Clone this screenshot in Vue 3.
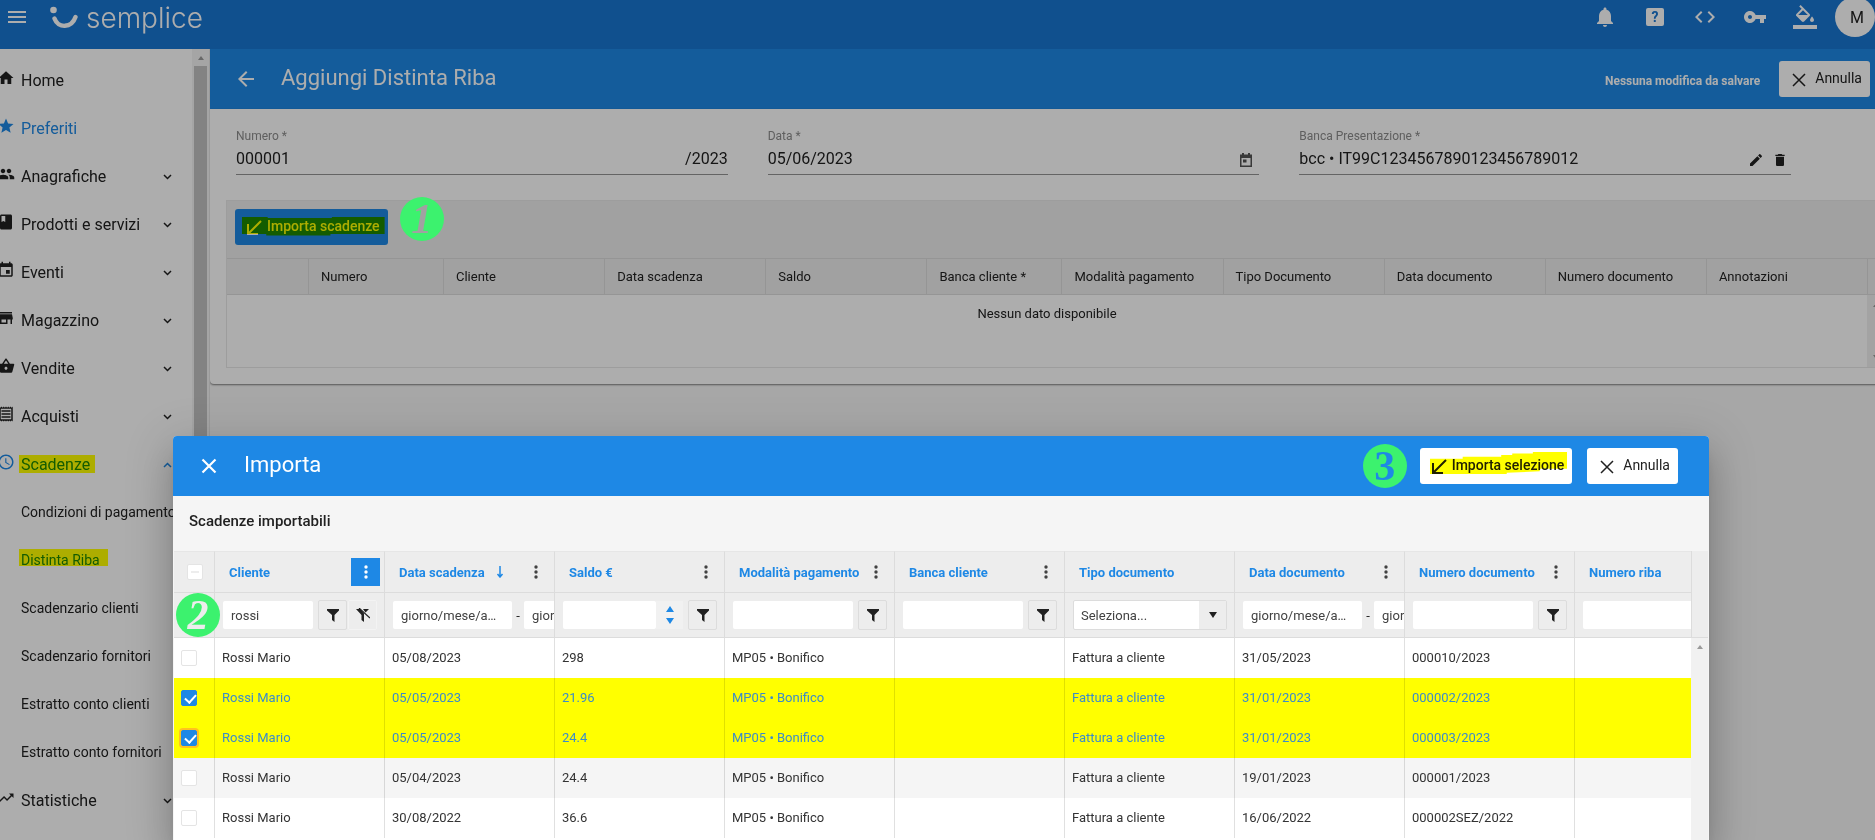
<script setup>
import { ref } from 'vue'

const icons = {
  home: 'M10 20v-6h4v6h5v-8h3L12 3 2 12h3v8z',
  star: 'M12 17.27L18.18 21l-1.64-7.03L22 9.24l-7.19-.61L12 2 9.19 8.63 2 9.24l5.46 4.73L5.82 21z',
  people: 'M16 11c1.66 0 2.99-1.34 2.99-3S17.66 5 16 5c-1.66 0-3 1.34-3 3s1.34 3 3 3zm-8 0c1.66 0 2.99-1.34 2.99-3S9.66 5 8 5C6.34 5 5 6.34 5 8s1.34 3 3 3zm0 2c-2.33 0-7 1.17-7 3.5V19h14v-2.5c0-2.33-4.67-3.5-7-3.5zm8 0c-.29 0-.62.02-.97.05 1.16.84 1.97 1.97 1.97 3.45V19h6v-2.5c0-2.33-4.67-3.5-7-3.5z',
  book: 'M18 2H6c-1.1 0-2 .9-2 2v16c0 1.1.9 2 2 2h12c1.1 0 2-.9 2-2V4c0-1.1-.9-2-2-2zM6 4h5v8l-2.5-1.5L6 12V4z',
  event: 'M17 12h-5v5h5v-5zM16 1v2H8V1H6v2H5c-1.11 0-1.99.9-1.99 2L3 19c0 1.1.89 2 2 2h14c1.1 0 2-.9 2-2V5c0-1.1-.9-2-2-2h-1V1h-2zm3 18H5V8h14v11z',
  store: 'M20 4H4v2h16V4zm1 10v-2l-1-5H4l-1 5v2h1v6h10v-6h4v6h2v-6h1zm-9 4H6v-4h6v4z',
  basket: 'M17.21 9l-4.38-6.56c-.19-.28-.51-.42-.83-.42-.32 0-.64.14-.83.43L6.79 9H2c-.55 0-1 .45-1 1 0 .09.01.18.04.27l2.54 9.27c.23.84 1 1.46 1.92 1.46h13c.92 0 1.69-.62 1.93-1.46l2.54-9.27L23 10c0-.55-.45-1-1-1h-4.79zM9 9l3-4.4L15 9H9zm3 8c-1.1 0-2-.9-2-2s.9-2 2-2 2 .9 2 2-.9 2-2 2z',
  receipt: 'M19.5 3.5L18 2l-1.500 1.500L15 2l-1.500 1.500L12 2l-1.500 1.500L9 2 7.500 3.500 6 2 4.500 3.500 3 2v20l1.500-1.500L6 22l1.500-1.500L9 22l1.500-1.500L12 22l1.500-1.500L15 22l1.500-1.500L18 22l1.500-1.500L21 22V2zM19 19H5V5h14v14zM6 15h12v2H6zm0-4h12v2H6zm0-4h12v2H6z',
  clock: 'M11.99 2C6.47 2 2 6.48 2 12s4.47 10 9.99 10C17.52 22 22 17.52 22 12S17.52 2 11.99 2zM12 20c-4.42 0-8-3.58-8-8s3.58-8 8-8 8 3.58 8 8-3.58 8-8 8zm.5-13H11v6l5.250 3.150.750-1.230-4.500-2.670z',
  trend: 'M16 6l2.290 2.290-4.880 4.880-4-4L2 16.590 3.410 18l6-6 4 4 6.300-6.290L22 12V6z',
  bell: 'M12 22c1.1 0 2-.9 2-2h-4c0 1.1.89 2 2 2zm6-6v-5c0-3.07-1.64-5.64-4.5-6.32V4c0-.83-.67-1.5-1.5-1.5s-1.5.67-1.5 1.5v.68C7.63 5.36 6 7.92 6 11v5l-2 2v1h16v-1l-2-2z',
  code: 'M9.4 16.6L4.8 12l4.6-4.6L8 6l-6 6 6 6 1.4-1.4zm5.2 0l4.6-4.6-4.6-4.6L16 6l6 6-6 6-1.4-1.4z',
  key: 'M12.65 10C11.83 7.67 9.61 6 7 6c-3.31 0-6 2.69-6 6s2.69 6 6 6c2.61 0 4.83-1.67 5.65-4H17v4h4v-4h2v-4H12.65zM7 14c-1.1 0-2-.9-2-2s.9-2 2-2 2 .9 2 2-.9 2-2 2z',
  fill: 'M16.56 8.94L7.62 0 6.21 1.41l2.38 2.38-5.15 5.15c-.59.59-.59 1.54 0 2.12l5.5 5.5c.29.29.68.44 1.06.44s.77-.15 1.06-.44l5.5-5.5c.59-.58.59-1.53 0-2.12zM5.21 10L10 5.21 14.79 10H5.21zM19 11.5s-2 2.17-2 3.5c0 1.1.9 2 2 2s2-.9 2-2c0-1.33-2-3.5-2-3.5zM0 20h24v4H0z'
}

const menu = [
  { label: 'Home', icon: 'home' },
  { label: 'Preferiti', icon: 'star', active: true },
  { label: 'Anagrafiche', icon: 'people', chevron: 'down' },
  { label: 'Prodotti e servizi', icon: 'book', chevron: 'down' },
  { label: 'Eventi', icon: 'event', chevron: 'down' },
  { label: 'Magazzino', icon: 'store', chevron: 'down' },
  { label: 'Vendite', icon: 'basket', chevron: 'down' },
  { label: 'Acquisti', icon: 'receipt', chevron: 'down' },
  { label: 'Scadenze', icon: 'clock', chevron: 'up', active: true, marked: true },
  { label: 'Condizioni di pagamento', sub: true },
  { label: 'Distinta Riba', sub: true, active: true, marked: true },
  { label: 'Scadenzario clienti', sub: true },
  { label: 'Scadenzario fornitori', sub: true },
  { label: 'Estratto conto clienti', sub: true },
  { label: 'Estratto conto fornitori', sub: true },
  { label: 'Statistiche', icon: 'trend', chevron: 'down' }
]

const actions = [
  { icon: 'bell', label: 'Notifiche' },
  { icon: 'help', label: 'Guida' },
  { icon: 'code', label: 'Sviluppatori' },
  { icon: 'key', label: 'Accessi' },
  { icon: 'fill', label: 'Tema' }
]

const mainColumns = [
  { label: '', cls: 'c-first' },
  { label: 'Numero', cls: 'c-narrow' },
  { label: 'Cliente', cls: 'c-wide' },
  { label: 'Data scadenza', cls: 'c-wide' },
  { label: 'Saldo', cls: 'c-wide' },
  { label: 'Banca cliente *', cls: 'c-narrow' },
  { label: 'Modalità pagamento', cls: 'c-wide' },
  { label: 'Tipo Documento', cls: 'c-wide' },
  { label: 'Data documento', cls: 'c-wide' },
  { label: 'Numero documento', cls: 'c-wide' },
  { label: 'Annotazioni', cls: 'c-wide' },
  { label: '', cls: 'c-bar' }
]

const columns = [
  { label: 'Cliente', filter: 'client', kebab: true, on: true },
  { label: 'Data scadenza', filter: 'date', kebab: true, sorted: true },
  { label: 'Saldo €', filter: 'number', kebab: true },
  { label: 'Modalità pagamento', filter: 'text', kebab: true },
  { label: 'Banca cliente', filter: 'text', kebab: true },
  { label: 'Tipo documento', filter: 'select' },
  { label: 'Data documento', filter: 'date', kebab: true },
  { label: 'Numero documento', filter: 'text', kebab: true },
  { label: 'Numero riba', filter: 'plain' }
]

const rows = ref([
  { on: false, cells: ['Rossi Mario', '05/08/2023', '298', 'MP05 • Bonifico', '', 'Fattura a cliente', '31/05/2023', '000010/2023', ''] },
  { on: true, cells: ['Rossi Mario', '05/05/2023', '21.96', 'MP05 • Bonifico', '', 'Fattura a cliente', '31/01/2023', '000002/2023', ''] },
  { on: true, focus: true, cells: ['Rossi Mario', '05/05/2023', '24.4', 'MP05 • Bonifico', '', 'Fattura a cliente', '31/01/2023', '000003/2023', ''] },
  { on: false, alt: true, cells: ['Rossi Mario', '05/04/2023', '24.4', 'MP05 • Bonifico', '', 'Fattura a cliente', '19/01/2023', '000001/2023', ''] },
  { on: false, cells: ['Rossi Mario', '30/08/2022', '36.6', 'MP05 • Bonifico', '', 'Fattura a cliente', '16/06/2022', '000002SEZ/2022', ''] }
])

const client = ref('rossi')
const numero = ref('000001')
const data = ref('05/06/2023')
const banca = ref('bcc • IT99C1234567890123456789012')
</script>

<template>
  <div class="shell">
    <header class="topbar">
      <button class="bare burger" aria-label="Menu">
        <svg width="18" height="12" viewBox="0 0 18 12" fill="currentColor"><path d="M0 0h18v2H0zM0 5h18v2H0zM0 10h18v2H0z" /></svg>
      </button>
      <a class="brand" href="#">
        <svg width="28" height="24" viewBox="0 0 28 24" aria-hidden="true">
          <circle cx="3.500" cy="4" r="3.300" fill="#fff" />
          <path d="M4.500 12.500C8 22.500 21.500 22.500 25.500 11" fill="none" stroke="#fff" stroke-width="4.400" stroke-linecap="round" />
        </svg>
        <span>semplice</span>
      </a>
      <nav class="actions">
        <button v-for="a in actions" :key="a.icon" class="bare" :aria-label="a.label">
          <span v-if="a.icon === 'help'" class="help">?</span>
          <svg v-else width="24" height="24" viewBox="0 0 24 24" fill="currentColor"><path :d="icons[a.icon]" /></svg>
        </button>
        <button class="avatar">M</button>
      </nav>
    </header>

    <div class="body">
      <aside class="sidebar">
        <nav class="menu">
          <a v-for="m in menu" :key="m.label" href="#" class="item" :class="{ sub: m.sub, active: m.active }">
            <svg v-if="m.icon" class="lead" width="18" height="18" viewBox="0 0 24 24" fill="currentColor"><path :d="icons[m.icon]" /></svg>
            <span class="name" :class="{ marked: m.marked }">{{ m.label }}</span>
            <svg v-if="m.chevron" class="chev" width="9" height="6" viewBox="0 0 9 6" fill="none" stroke="currentColor" stroke-width="1.500">
              <path :d="m.chevron === 'down' ? 'M1 1l3.500 3.500L8 1' : 'M1 5l3.500-3.500L8 5'" />
            </svg>
          </a>
        </nav>
        <div class="track"><i class="up"></i><i class="thumb"></i></div>
      </aside>

      <main class="main">
        <div class="pagebar">
          <button class="bare" aria-label="Indietro">
            <svg width="24" height="24" viewBox="0 0 24 24" fill="currentColor"><path d="M20 11H7.830l5.590-5.590L12 4l-8 8 8 8 1.410-1.410L7.830 13H20v-2z" /></svg>
          </button>
          <h1>Aggiungi Distinta Riba</h1>
          <span class="status">Nessuna modifica da salvare</span>
          <button class="btn">
            <svg width="14" height="14" viewBox="0 0 14 14" stroke="currentColor" stroke-width="1.500"><path d="M1 1l12 12M13 1L1 13" /></svg>
            Annulla
          </button>
        </div>

        <section class="card">
          <div class="fields">
            <div class="field">
              <label for="numero">Numero *</label>
              <div class="line"><input id="numero" v-model="numero" /><span>/2023</span></div>
            </div>
            <div class="field">
              <label for="data">Data *</label>
              <div class="line cal">
                <input id="data" v-model="data" />
                <button class="bare" aria-label="Calendario">
                  <svg width="12" height="14" viewBox="0 0 12 14" fill="#555"><path d="M2 0h2v1.500h4V0h2v1.500h2V14H0V1.500h2zM1.500 5v7.500h9V5zM3 6.500h3.500V9.500H3z" fill-rule="evenodd" /></svg>
                </button>
              </div>
            </div>
            <div class="field">
              <label for="banca">Banca Presentazione *</label>
              <div class="line tools">
                <input id="banca" v-model="banca" />
                <button class="bare" aria-label="Modifica">
                  <svg width="16" height="16" viewBox="0 0 24 24" fill="currentColor"><path d="M3 17.250V21h3.750L17.810 9.940l-3.750-3.750L3 17.250zM20.710 7.040c.39-.39.39-1.020 0-1.410l-2.340-2.340c-.39-.39-1.020-.39-1.410 0l-1.830 1.830 3.750 3.750 1.830-1.830z" /></svg>
                </button>
                <button class="bare" aria-label="Elimina">
                  <svg width="16" height="16" viewBox="0 0 24 24" fill="currentColor"><path d="M6 19c0 1.100.9 2 2 2h8c1.100 0 2-.9 2-2V7H6v12zM19 4h-3.500l-1-1h-5l-1 1H5v2h14V4z" /></svg>
                </button>
              </div>
            </div>
          </div>

          <div class="grid">
            <div class="gridbar">
              <button class="btn primary">
                <svg width="15" height="15" viewBox="0 0 15 15" fill="none" stroke="currentColor" stroke-width="2"><path d="M14 1L2 13M1 4v10h10" /></svg>
                Importa scadenze
                <i class="marker"></i>
              </button>
              <span class="badge one">1</span>
            </div>
            <table class="maintable">
              <colgroup><col v-for="(c, i) in mainColumns" :key="i" :class="c.cls" /></colgroup>
              <thead>
                <tr><th v-for="(c, i) in mainColumns" :key="i">{{ c.label }}</th></tr>
              </thead>
              <tbody>
                <tr>
                  <td colspan="11">Nessun dato disponibile</td>
                  <td class="minibar"><div class="minitrack"><i class="up"></i><i class="down"></i></div></td>
                </tr>
              </tbody>
            </table>
          </div>
        </section>
      </main>
    </div>

    <div class="scrim"></div>

    <section class="dialog" role="dialog" aria-label="Importa">
      <header class="dhead">
        <button class="bare" aria-label="Chiudi">
          <svg width="24" height="24" viewBox="0 0 24 24" stroke="currentColor" stroke-width="2.200"><path d="M5.500 5.500l13 13M18.500 5.500l-13 13" /></svg>
        </button>
        <h2>Importa</h2>
        <span class="badge three">3</span>
        <button class="btn wide">
          <svg width="15" height="15" viewBox="0 0 15 15" fill="none" stroke="currentColor" stroke-width="2"><path d="M14 1L2 13M1 4v10h10" /></svg>
          Importa selezione
          <i class="marker rising"></i>
        </button>
        <button class="btn">
          <svg width="14" height="14" viewBox="0 0 14 14" stroke="currentColor" stroke-width="1.500"><path d="M1 1l12 12M13 1L1 13" /></svg>
          Annulla
        </button>
      </header>
      <h3>Scadenze importabili</h3>
      <div class="dgrid">
        <div class="dscroll">
          <table class="dtable">
            <colgroup>
              <col class="k-check" />
              <col v-for="c in columns" :key="c.label" class="k-col" />
            </colgroup>
            <thead>
              <tr class="titles">
                <th class="pick"><input type="checkbox" class="all" aria-label="Seleziona tutto" /></th>
                <th v-for="c in columns" :key="c.label">
                  <div class="title">
                    <span>{{ c.label }}</span>
                    <svg v-if="c.sorted" class="sort" width="8" height="12" viewBox="0 0 8 12" fill="none" stroke="currentColor" stroke-width="1.500"><path d="M4 0v11M1.500 8L4 11l2.500-3" /></svg>
                    <button v-if="c.kebab" class="kebab" :class="{ on: c.on }" :aria-label="'Menu ' + c.label">
                      <svg width="4" height="14" viewBox="0 0 4 14" fill="currentColor"><circle cx="2" cy="2" r="1.700" /><circle cx="2" cy="7" r="1.700" /><circle cx="2" cy="12" r="1.700" /></svg>
                    </button>
                  </div>
                </th>
              </tr>
              <tr class="filters">
                <td class="pick"><span class="badge two">2</span></td>
                <td v-for="c in columns" :key="c.label">
                  <div class="filter">
                    <template v-if="c.filter === 'client'">
                      <input v-model="client" class="box" :aria-label="c.label" />
                      <button class="fbtn" aria-label="Filtra"><svg width="12" height="13" viewBox="0 0 12 13" fill="currentColor"><path d="M0 0h12v1.500L7.500 6v7L5 11V6L0 1.500z" /></svg></button>
                      <button class="fbtn flat" aria-label="Rimuovi filtro"><svg width="14" height="14" viewBox="0 0 14 14"><path d="M0 1h4l4 4.500V14l-2.500-2V7zM7 1h6L9.500 4.500z" fill="currentColor" /><path d="M3 0l11 10" stroke="currentColor" stroke-width="1.200" /></svg></button>
                    </template>
                    <template v-else-if="c.filter === 'date'">
                      <input class="box date" placeholder="giorno/mese/anno" :aria-label="c.label + ' da'" />
                      <span class="dash">-</span>
                      <input class="box date" placeholder="giorno/mese/anno" :aria-label="c.label + ' a'" />
                    </template>
                    <template v-else-if="c.filter === 'select'">
                      <span class="pickbox">
                        <select :aria-label="c.label"><option>Seleziona...</option></select>
                        <span class="arrow"><svg width="8" height="6" viewBox="0 0 8 6" fill="currentColor"><path d="M0 0h8L4 6z" /></svg></span>
                      </span>
                    </template>
                    <template v-else-if="c.filter === 'plain'">
                      <input class="box date" :aria-label="c.label" />
                    </template>
                    <template v-else>
                      <input class="box" :aria-label="c.label" />
                      <span v-if="c.filter === 'number'" class="spin"><svg width="8" height="18" viewBox="0 0 8 18" fill="currentColor"><path d="M4 0l4 6H0zM4 18l4-6H0z" /></svg></span>
                      <button class="fbtn" aria-label="Filtra"><svg width="12" height="13" viewBox="0 0 12 13" fill="currentColor"><path d="M0 0h12v1.500L7.500 6v7L5 11V6L0 1.500z" /></svg></button>
                    </template>
                  </div>
                </td>
              </tr>
            </thead>
            <tbody>
              <tr v-for="(r, i) in rows" :key="i" :class="{ selected: r.on, alt: r.alt }">
                <td class="pick"><input v-model="r.on" type="checkbox" :class="{ ring: r.focus }" aria-label="Seleziona riga" /></td>
                <td v-for="(c, j) in r.cells" :key="j">{{ c }}</td>
              </tr>
            </tbody>
          </table>
        </div>
        <div class="gutter"><div class="guttertop"></div><i class="up"></i></div>
      </div>
    </section>
  </div>
</template>

<style>
html,
body {
  margin: 0;
  background: #f7f7f7;
}
</style>

<style scoped>
* {
  box-sizing: border-box;
}
.shell {
  position: relative;
  height: 100vh;
  display: flex;
  flex-direction: column;
  overflow: hidden;
  font-family: Roboto, "Liberation Sans", sans-serif;
  font-size: 13px;
  color: #212121;
}
button,
input,
select {
  font: inherit;
  color: inherit;
}
button {
  cursor: pointer;
}
a {
  color: inherit;
  text-decoration: none;
}
svg {
  display: block;
  flex: none;
}
.bare {
  display: flex;
  align-items: center;
  justify-content: center;
  padding: 0;
  border: 0;
  background: none;
}
.topbar {
  display: flex;
  align-items: flex-start;
  height: 49px;
  flex: none;
  background: #1976d2;
  color: #fff;
}
.burger {
  height: 34px;
  padding-left: 8px;
}
.brand {
  display: flex;
  align-items: center;
  gap: 8px;
  height: 36px;
  margin-left: 24px;
}
.brand span {
  font-family: Inter, sans-serif;
  font-size: 28px;
  font-weight: 300;
  line-height: 34px;
}
.actions {
  display: flex;
  align-items: center;
  height: 34px;
  margin-left: auto;
}
.actions .bare {
  width: 50px;
}
.help {
  width: 18px;
  height: 18px;
  border-radius: 2px;
  background: #fff;
  color: #1976d2;
  font-size: 14px;
  font-weight: 700;
  line-height: 18px;
  text-align: center;
}
.avatar {
  width: 40px;
  height: 40px;
  flex: none;
  margin-left: 5px;
  padding: 0 0 0 4px;
  border: 0;
  border-radius: 50%;
  background: #fff;
  color: #212121;
  font-size: 16px;
}
.body {
  display: flex;
  flex: 1;
  min-height: 0;
}
.sidebar {
  display: flex;
  width: 210px;
  flex: none;
  overflow: hidden;
  background: #fff;
  border-right: 1px solid #e4e4e4;
}
.menu {
  flex: 1;
  min-width: 0;
  padding-top: 7px;
}
.item {
  display: flex;
  align-items: center;
  height: 48px;
  padding: 0 20px 0 21px;
  font-size: 16px;
  white-space: nowrap;
}
.lead {
  margin: 0 6px 4px -24px;
}
.item.sub {
  font-size: 14px;
}
.item.active {
  color: #1e88e5;
}
.name {
  position: relative;
}
.name.marked::after {
  content: "";
  position: absolute;
  inset: 0 -5px 1px -2px;
  background: #ff0;
  mix-blend-mode: multiply;
}
.sub .name.marked::after {
  inset: -3px -8px 2px -2px;
}
.chev {
  margin: 2px 0 0 auto;
}
.track {
  width: 17px;
  flex: none;
  display: flex;
  flex-direction: column;
  align-items: center;
  background: #f4f4f4;
}
.up,
.down {
  border: 3px solid transparent;
  border-top: 0;
  border-bottom: 4px solid #9a9a9a;
}
.down {
  border-bottom: 0;
  border-top: 4px solid #9a9a9a;
}
.track .up {
  margin: 7px 0 6px;
}
.thumb {
  flex: 1;
  width: 13px;
  background: #c1c1c1;
}
.main {
  flex: 1;
  min-width: 0;
  overflow: hidden;
}
.pagebar {
  display: flex;
  align-items: center;
  height: 60px;
  padding: 0 5px 0 24px;
  background: #1e88e5;
  color: #fff;
}
h1,
h2,
h3 {
  margin: 0;
  font-weight: 400;
}
h1,
h2 {
  margin-left: 23px;
  padding-bottom: 2px;
  font-size: 22px;
  line-height: 28px;
}
.status {
  margin: 4px 19px 0 auto;
  font-size: 12px;
  font-weight: 700;
}
.btn {
  position: relative;
  display: flex;
  align-items: center;
  gap: 9px;
  height: 36px;
  padding: 0 8px 2px 13px;
  border: 0;
  border-radius: 3px;
  background: #fff;
  color: #212121;
  font-size: 14px;
  font-weight: 400;
  white-space: nowrap;
}
.btn svg {
  margin-top: 3px;
}
.btn.primary,
.btn.wide {
  gap: 5px;
  padding-left: 12px;
  font-weight: 500;
}
.btn.primary {
  background: #1e88e5;
  color: #fff;
}
.marker {
  position: absolute;
  inset: 8px 3px 9px 7px;
  background: #ff0;
  mix-blend-mode: multiply;
  clip-path: polygon(0 0, 18% 0, 18% 8%, 63% 8%, 63% 3%, 100% 3%, 100% 92%, 62% 92%, 62% 100%, 17% 100%, 17% 92%, 0 92%);
}
.marker.rising {
  inset: 4px 5px 10px 10px;
  clip-path: polygon(0 31%, 24% 31%, 24% 22%, 52% 22%, 52% 14%, 60% 14%, 60% 7%, 75% 7%, 75% 0, 100% 0, 100% 76%, 80% 76%, 80% 88%, 56% 94%, 56% 100%, 0 100%);
}
.card {
  width: calc(100% + 26px);
  height: 275px;
  padding: 20px 16px 0;
  background: #fff;
  border-radius: 0 0 4px 4px;
  box-shadow: 0 1px 2px rgba(0, 0, 0, 0.5);
}
.fields {
  display: grid;
  grid-template-columns: repeat(3, 1fr);
  gap: 40px;
  padding: 0 94px 25px 10px;
}
.field label {
  display: block;
  color: #8c8c8c;
  font-size: 12px;
  line-height: 14px;
}
.line {
  display: flex;
  align-items: center;
  height: 32px;
  padding-bottom: 1px;
  border-bottom: 1px solid #949494;
  font-size: 16px;
}
.line input {
  flex: 1;
  min-width: 0;
  padding: 0;
  border: 0;
  outline: 0;
  background: none;
}
.line .bare {
  margin-top: 3px;
}
.cal {
  padding-right: 7px;
}
.tools {
  gap: 8px;
  padding-right: 3px;
}
.grid {
  border: 1px solid #e8e8e8;
}
.gridbar {
  display: flex;
  align-items: center;
  gap: 12px;
  height: 57px;
  padding: 0 0 6px 8px;
  background: #ededed;
}
.badge {
  position: relative;
  z-index: 5;
  display: flex;
  align-items: center;
  justify-content: center;
  width: 44px;
  height: 44px;
  flex: none;
  border-radius: 50%;
  background: #3cf26e;
  font-family: "Liberation Serif", serif;
  font-size: 42px;
  font-weight: 700;
  line-height: 44px;
}
.one {
  margin-top: -16px;
  color: #a1a1a1;
  font-style: italic;
}
.two {
  position: absolute;
  top: 0;
  left: 2px;
  color: #ededed;
  font-style: italic;
}
.three {
  margin-left: auto;
  color: #1e88e5;
}
table {
  width: 100%;
  table-layout: fixed;
  border-collapse: separate;
  border-spacing: 0;
}
.c-first {
  width: 81px;
}
.c-narrow {
  width: 135px;
}
.c-bar {
  width: 17px;
}
.maintable th {
  height: 37px;
  padding: 0 0 1px 12px;
  border: solid #dcdcdc;
  border-width: 1px 0 1px 1px;
  background: #ededed;
  font-weight: 400;
  text-align: left;
}
.maintable th:first-child {
  border-left: 0;
}
.maintable td {
  height: 72px;
  padding: 11px 0 0;
  text-align: center;
  vertical-align: top;
}
.maintable .minibar {
  padding: 0;
  background: #f1f1f1;
}
.minitrack {
  display: flex;
  flex-direction: column;
  align-items: center;
  justify-content: space-between;
  height: 72px;
  padding: 8px 0;
}
.scrim {
  position: absolute;
  inset: 0;
  z-index: 2;
  background: rgba(0, 0, 0, 0.32);
}
.dialog {
  position: absolute;
  z-index: 3;
  top: 436px;
  right: 166px;
  bottom: 0;
  left: 173px;
  display: flex;
  flex-direction: column;
  border-radius: 4px 4px 0 0;
  background: #f5f5f5;
  box-shadow: 0 11px 15px -7px rgba(0, 0, 0, 0.2), 0 24px 38px 3px rgba(0, 0, 0, 0.14), 0 9px 46px 8px rgba(0, 0, 0, 0.12);
}
.dhead {
  display: flex;
  align-items: center;
  height: 60px;
  flex: none;
  padding: 0 31px 0 24px;
  border-radius: 4px 4px 0 0;
  background: #1e88e5;
  color: #fff;
}
.dhead .wide {
  margin: 0 15px 0 13px;
}
.dialog h3 {
  height: 55px;
  flex: none;
  padding-left: 16px;
  font-size: 15px;
  font-weight: 500;
  line-height: 51px;
}
.dgrid {
  display: flex;
  flex: 1;
  min-height: 0;
  padding: 0 1px;
  overflow: hidden;
}
.dscroll {
  flex: 1;
  min-width: 0;
  overflow: hidden;
  background: #fff;
}
.dtable {
  width: 1570px;
}
.k-check {
  width: 40px;
}
.k-col {
  width: 170px;
}
.gutter {
  width: 17px;
  flex: none;
  display: flex;
  flex-direction: column;
  align-items: center;
  background: #f1f1f1;
}
.guttertop {
  align-self: stretch;
  height: 87px;
  border: solid #dcdcdc;
  border-width: 0 0 1px 1px;
  background: #ededed;
}
.gutter .up {
  margin-top: 7px;
}
.dtable th,
.dtable td {
  padding: 0 0 0 8px;
  border-left: 1px solid #dcdcdc;
  text-align: left;
}
.dtable td:nth-child(n + 2) {
  overflow: hidden;
}
.dtable tbody td {
  height: 40px;
  padding: 0 0 1px 7px;
  border-left-color: rgba(0, 0, 0, 0.12);
  color: #333;
}
.dtable .pick {
  position: relative;
  padding: 0 0 0 7px;
  border-left: 0;
}
.titles th {
  height: 42px;
  border-top: 1px solid #e6e6e6;
  border-bottom: 1px solid #dcdcdc;
  background: #ededed;
  color: #1e88e5;
}
.dtable .titles .pick {
  padding-left: 13px;
}
.filters td {
  height: 45px;
  border-bottom: 1px solid #dcdcdc;
  background: #ededed;
}
.title {
  display: flex;
  align-items: center;
  padding: 0 4px 0 6px;
  white-space: nowrap;
}
.sort {
  margin-left: 11px;
}
.kebab {
  display: flex;
  align-items: center;
  justify-content: center;
  width: 29px;
  height: 28px;
  flex: none;
  margin-left: auto;
  padding: 0;
  border: 0;
  background: none;
  color: #424242;
}
.title > span {
  min-width: 0;
}
.kebab.on {
  background: #1e88e5;
  color: #fff;
}
.filter {
  display: flex;
  align-items: center;
  width: 154px;
  height: 28px;
}
.box {
  flex: 1;
  min-width: 0;
  height: 28px;
  padding: 0 8px;
  border: 0;
  border-radius: 2px;
  outline: 0;
  background: #fff;
  color: #424242;
  text-overflow: ellipsis;
}
.box::placeholder {
  color: #424242;
  opacity: 1;
}
.box.date {
  flex: none;
  width: 119px;
  padding-right: 15px;
}
.dash {
  width: 12px;
  flex: none;
  text-align: center;
}
.fbtn {
  display: flex;
  align-items: center;
  justify-content: center;
  width: 29px;
  height: 30px;
  flex: none;
  margin-left: 5px;
  padding: 0;
  border: 1px solid #dcdcdc;
  border-radius: 2px;
  background: #ededed;
  color: #212121;
}
.fbtn.flat {
  margin-left: 1px;
  border-color: #f3f3f3;
}
.spin {
  display: flex;
  align-items: center;
  justify-content: center;
  width: 27px;
  height: 28px;
  flex: none;
  background: #f1f1f1;
  color: #1e88e5;
}
.pickbox {
  position: relative;
  width: 154px;
  height: 30px;
}
.pickbox select {
  width: 100%;
  height: 100%;
  padding: 0 32px 0 7px;
  border: 1px solid #dcdcdc;
  border-radius: 2px;
  appearance: none;
  background: #fff;
  color: #424242;
}
.arrow {
  position: absolute;
  inset: 1px 1px 1px auto;
  display: flex;
  align-items: center;
  justify-content: center;
  width: 27px;
  background: #ededed;
  pointer-events: none;
}
.dtable tbody .alt td {
  background: #f5f5f5;
}
.dtable tbody .selected td {
  background: #ff0;
  color: #3c8cc8;
}
input[type="checkbox"] {
  display: block;
  width: 16px;
  height: 16px;
  margin: 0;
  border: 1px solid #e4e4e4;
  border-radius: 2px;
  appearance: none;
  background: #fff;
}
input[type="checkbox"]:checked {
  border-color: #1e88e5;
  background: #1e88e5;
}
input[type="checkbox"]:checked::after {
  content: "";
  display: block;
  width: 5px;
  height: 9px;
  margin: 1px 0 0 5px;
  border: solid #fff;
  border-width: 0 2px 2px 0;
  transform: rotate(42deg);
}
input.ring {
  box-shadow: 0 0 0 2px #ffc21e;
}
input.all::after {
  content: "";
  display: block;
  width: 8px;
  height: 2px;
  margin: 6px 3px;
  background: #ededed;
}
</style>
